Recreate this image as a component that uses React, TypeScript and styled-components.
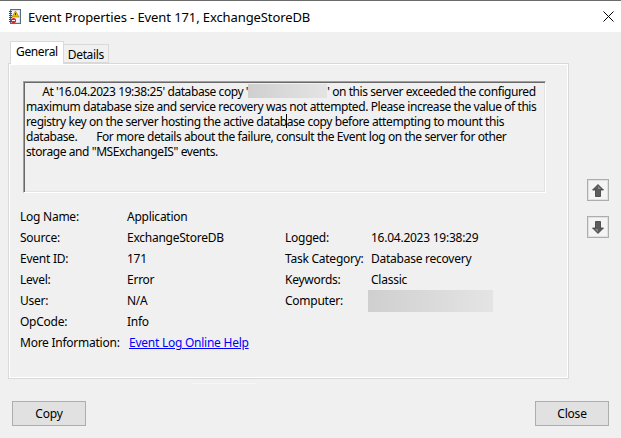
import styled, { createGlobalStyle } from "styled-components";

const GlobalStyle = createGlobalStyle`
  html, body {
    margin: 0;
    padding: 0;
    background: #f0f0f0;
  }
  body {
    font-family: "Noto Sans", "Segoe UI", sans-serif;
    font-size: 12px;
    color: #000;
  }
`;

const Window = styled.div`
  width: 621px;
  height: 438px;
  box-sizing: border-box;
  border-top: 1px solid #6b6b6b;
  background: #f0f0f0;
  display: flex;
  flex-direction: column;
  overflow: hidden;
`;

const TitleBar = styled.div`
  height: 31px;
  background: #fff;
  display: flex;
  align-items: center;
  padding: 0 0 0 8px;
`;

const TitleText = styled.span`
  margin-left: 7px;
  font-size: 13px;
  letter-spacing: -0.1px;
  flex: 1;
`;

const CloseBox = styled.div`
  width: 26px;
  height: 31px;
  display: flex;
  align-items: center;
  justify-content: center;
`;

const Body = styled.div`
  flex: 1;
  display: flex;
  flex-direction: column;
  padding: 9px 12px 0 8px;
`;

const MainRow = styled.div`
  display: flex;
  align-items: flex-start;
`;

const TabArea = styled.div`
  width: 561px;
  display: flex;
  flex-direction: column;
`;

const TabStrip = styled.div`
  display: flex;
  align-items: flex-end;
  height: 22px;
  padding-left: 2px;
  position: relative;
  z-index: 1;
`;

const Tab = styled.div<{ $active?: boolean }>`
  box-sizing: border-box;
  height: ${(p) => (p.$active ? "23px" : "19px")};
  padding: ${(p) => (p.$active ? "1px 5px 0 5px" : "1px 4px 0 4px")};
  margin-bottom: ${(p) => (p.$active ? "-1px" : "0")};
  background: ${(p) => (p.$active ? "#fff" : "#f0f0f0")};
  border: 1px solid #d9d9d9;
  border-bottom: ${(p) => (p.$active ? "none" : "1px solid #d9d9d9")};
  border-left: ${(p) => (p.$active ? "1px solid #d9d9d9" : "none")};
  letter-spacing: -0.35px;
`;

const Panel = styled.div`
  box-sizing: border-box;
  height: 316px;
  border: 1px solid #d9d9d9;
  box-shadow: inset 1px 1px 0 #fff, inset -1px -1px 0 #fff;
  padding: 17px 22px 0 14px;
  display: flex;
  flex-direction: column;
`;

const Description = styled.div`
  box-sizing: border-box;
  height: 112px;
  border: 1px solid;
  border-color: #a0a0a0 #fff #fff #a0a0a0;
  box-shadow: inset 1px 1px 0 #696969, inset -1px -1px 0 #e3e3e3;
  padding: 2px 2px 0;
  line-height: 15px;
  letter-spacing: -0.42px;
  white-space: pre;
  overflow: hidden;
`;

const Redacted = styled.span<{ $w: number; $h: number }>`
  display: inline-block;
  vertical-align: top;
  width: ${(p) => p.$w}px;
  height: ${(p) => p.$h}px;
  background: linear-gradient(90deg, #cfcfcf, #dcdcdc 60%, #e4e4e4);
`;

const Caret = styled.span`
  display: inline-block;
  width: 1px;
  height: 14px;
  background: #000;
  vertical-align: top;
  margin: 0 -0.5px;
`;

const Fields = styled.div`
  margin-top: 13px;
  margin-left: -3px;
  display: grid;
  grid-template-columns: 107px 158px 86px 1fr;
  grid-auto-rows: 21px;
  align-items: center;
  letter-spacing: -0.25px;
`;

const Cell = styled.div`
  white-space: nowrap;
  display: flex;
  align-items: center;
`;

const LinkText = styled.a`
  color: #0000ff;
  text-decoration: underline;
  margin-left: 2px;
  cursor: pointer;
`;

const SideButtons = styled.div`
  display: flex;
  flex-direction: column;
  gap: 15px;
  margin-left: 18px;
  margin-top: 138px;
`;

const ArrowButton = styled.div`
  box-sizing: border-box;
  width: 22px;
  height: 22px;
  border: 1px solid #adadad;
  background: #e1e1e1;
  display: flex;
  align-items: center;
  justify-content: center;
`;

const ArrowFace = styled.div`
  width: 18px;
  height: 18px;
  background: #f4f4f4;
  display: flex;
  align-items: center;
  justify-content: center;
`;

const Footer = styled.div`
  display: flex;
  justify-content: space-between;
  padding: 17px 0 0 4px;
`;

const Button = styled.button`
  box-sizing: border-box;
  width: 74px;
  height: 25px;
  border: 1px solid #adadad;
  background: #e1e1e1;
  font-family: "Noto Sans", "Segoe UI", sans-serif;
  font-size: 12px;
  letter-spacing: -0.2px;
  color: #000;
  padding: 0;
`;

const FocusMark = styled.div`
  width: 64px;
  height: 1px;
  margin: 4px 0 0 185px;
  background: #f7f7f7;
`;

function TitleIcon() {
  return (
    <svg width="13" height="15" viewBox="0 0 13 15">
      <rect x="2.5" y="0.5" width="10" height="14" fill="#d9dee8" stroke="#5a6b86" />
      <rect x="4" y="2" width="7" height="11" fill="#f4f6fa" />
      {[2, 4, 6, 8, 10, 12].map((y) => (
        <rect key={y} x="1" y={y} width="3" height="1" fill="#3b4a63" />
      ))}
      <polygon points="7.5,2 11,8 4,8" fill="#f2c200" stroke="#8a6d00" strokeWidth="0.6" />
      <rect x="7.1" y="4" width="0.9" height="2.2" fill="#3a2c00" />
      <circle cx="5.5" cy="11.5" r="2.6" fill="#e0242b" />
      <rect x="4" y="11" width="3" height="1" fill="#fff" />
    </svg>
  );
}

function CloseIcon() {
  return (
    <svg width="11" height="11" viewBox="0 0 11 11">
      <path d="M0.5 0.5 L10.5 10.5 M10.5 0.5 L0.5 10.5" stroke="#000" strokeWidth="1" />
    </svg>
  );
}

function ArrowIcon({ down }: { down?: boolean }) {
  return (
    <svg
      width="12"
      height="13"
      viewBox="0 0 12 13"
      style={{ transform: down ? "rotate(180deg)" : undefined }}
    >
      <polygon points="6,0.5 11.5,6 8.5,6 8.5,12.5 3.5,12.5 3.5,6 0.5,6" fill="#5c5c5c" stroke="#3c3c3c" strokeWidth="0.8" />
      <polygon points="6,2 9,5 6,5" fill="#8a8a8a" />
    </svg>
  );
}

const fields: [string, React.ReactNode, string?, React.ReactNode?][] = [
  ["Log Name:", "Application"],
  ["Source:", "ExchangeStoreDB", "Logged:", "16.04.2023 19:38:29"],
  ["Event ID:", "171", "Task Category:", "Database recovery"],
  ["Level:", "Error", "Keywords:", "Classic"],
  ["User:", "N/A", "Computer:", <Redacted $w={125} $h={22} style={{ marginLeft: -3 }} />],
  ["OpCode:", "Info"],
  ["More Information:", <LinkText>Event Log Online Help</LinkText>],
];

export default function App() {
  return (
    <>
      <GlobalStyle />
      <Window>
        <TitleBar>
          <TitleIcon />
          <TitleText>Event Properties - Event 171, ExchangeStoreDB</TitleText>
          <CloseBox>
            <CloseIcon />
          </CloseBox>
        </TitleBar>
        <Body>
          <MainRow>
            <TabArea>
              <TabStrip>
                <Tab $active>General</Tab>
                <Tab>Details</Tab>
              </TabStrip>
              <Panel>
                <Description>
                  {"      At '16.04.2023 19:38:25' database copy '"}
                  <Redacted $w={79} $h={14} />
                  {"' on this server exceeded the configured\n"}
                  {"maximum database size and service recovery was not attempted. Please increase the value of this\n"}
                  {"registry key on the server hosting the active datab"}
                  <Caret />
                  {"ase copy before attempting to mount this\n"}
                  {"database.       For more details about the failure, consult the Event log on the server for other\n"}
                  {'storage and "MSExchangeIS" events.'}
                </Description>
                <Fields>
                  {fields.map(([l1, v1, l2, v2], i) => (
                    <>
                      <Cell key={`a${i}`}>{l1}</Cell>
                      <Cell key={`b${i}`}>{v1}</Cell>
                      <Cell key={`c${i}`}>{l2 ?? ""}</Cell>
                      <Cell key={`d${i}`}>{v2 ?? ""}</Cell>
                    </>
                  ))}
                </Fields>
              </Panel>
              <FocusMark />
            </TabArea>
            <SideButtons>
              <ArrowButton>
                <ArrowFace>
                  <ArrowIcon />
                </ArrowFace>
              </ArrowButton>
              <ArrowButton>
                <ArrowFace>
                  <ArrowIcon down />
                </ArrowFace>
              </ArrowButton>
            </SideButtons>
          </MainRow>
          <Footer>
            <Button>Copy</Button>
            <Button>Close</Button>
          </Footer>
        </Body>
      </Window>
    </>
  );
}
